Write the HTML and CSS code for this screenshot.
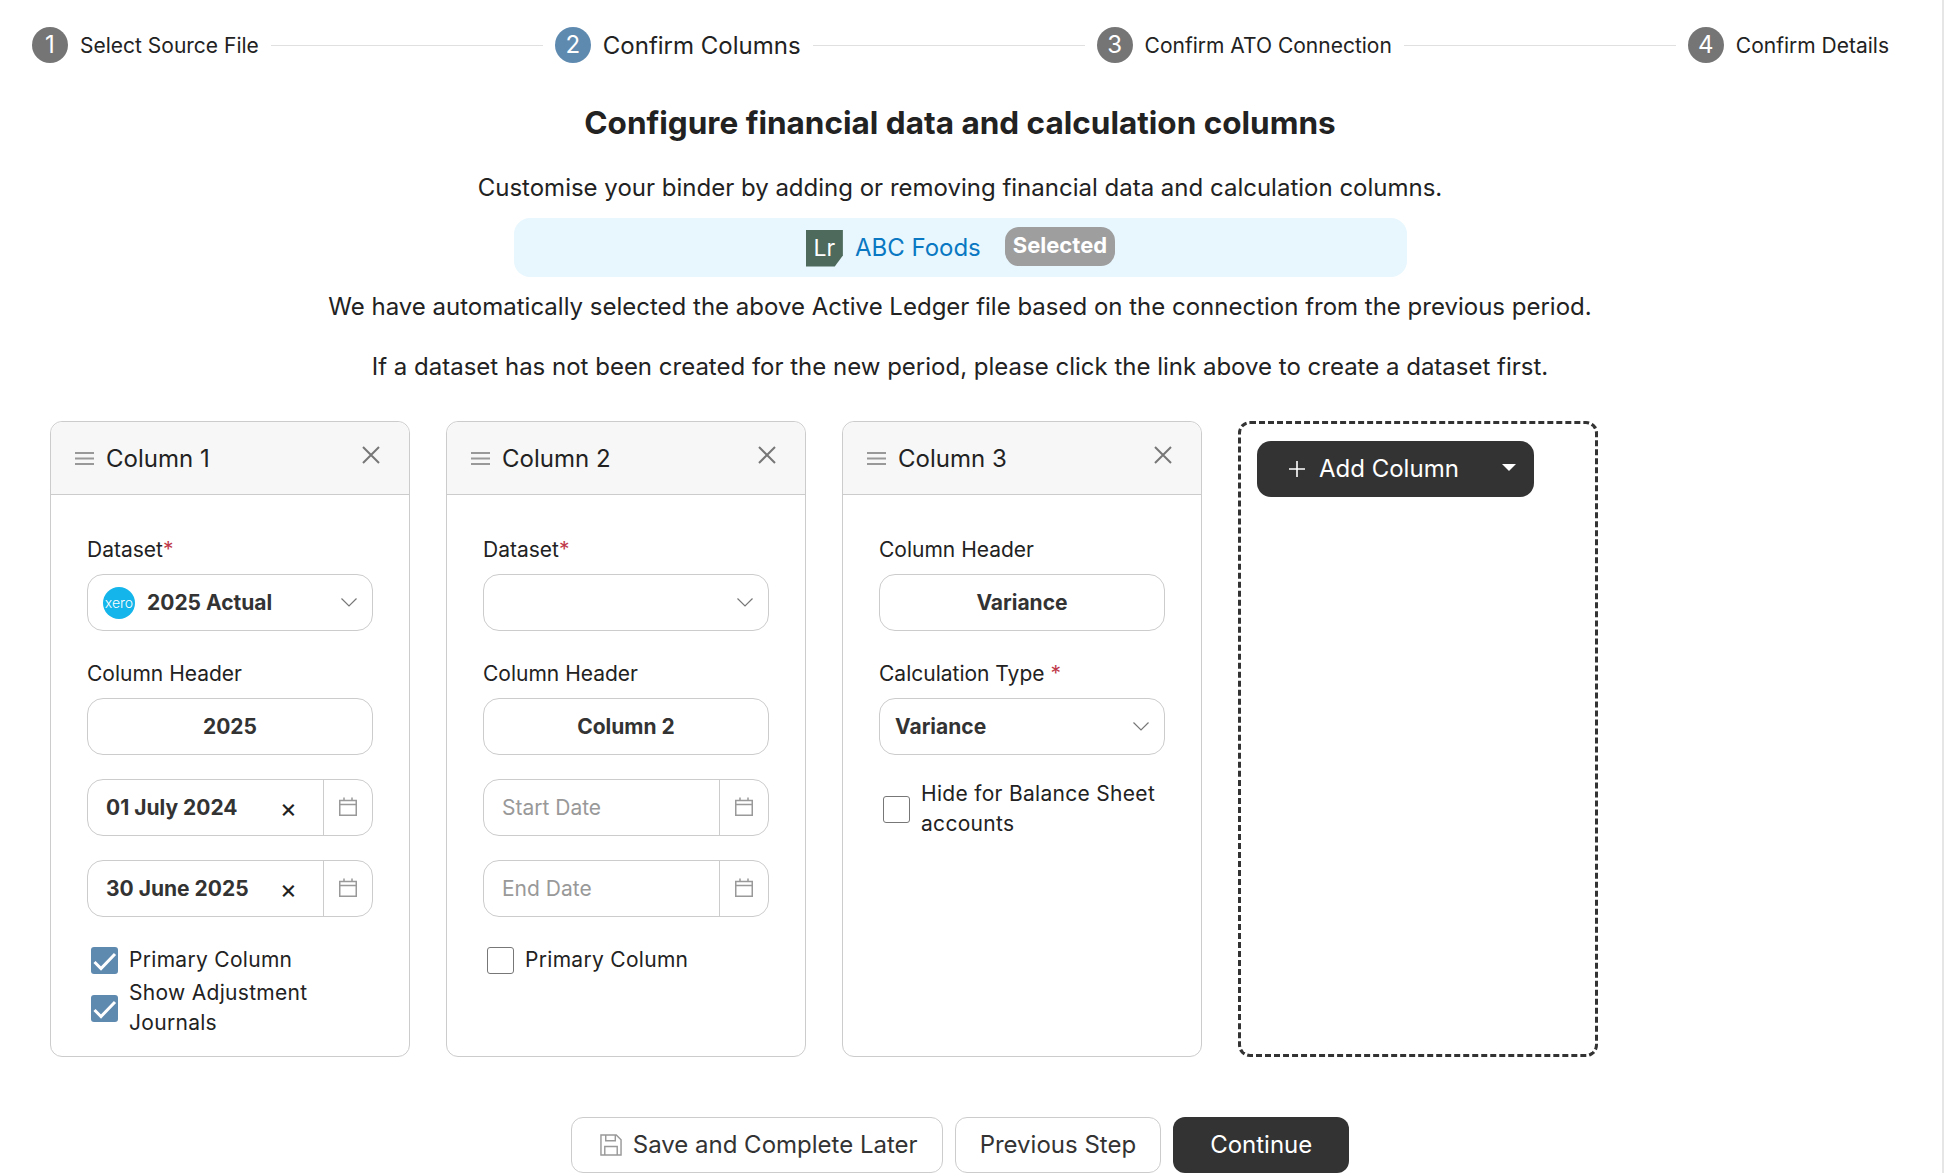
FILE: index.html
```html
<!DOCTYPE html>
<html lang="en">
  <head>
    <meta charset="UTF-8">
    <title>Confirm Columns</title>
    <link rel="stylesheet" href="styles.css">
  </head>
  <body>
    <div class="scroll-edge"></div>
    <div class="page">
      <div class="steps">
        <div class="step"><span class="step-num">1</span><span class="step-name">Select Source File</span></div>
        <div class="step-line"></div>
        <div class="step step-active"><span class="step-num">2</span><span class="step-name">Confirm Columns</span></div>
        <div class="step-line"></div>
        <div class="step"><span class="step-num">3</span><span class="step-name">Confirm ATO Connection</span></div>
        <div class="step-line"></div>
        <div class="step"><span class="step-num">4</span><span class="step-name">Confirm Details</span></div>
      </div>

      <h1 class="title">Configure financial data and calculation columns</h1>
      <p class="intro">Customise your binder by adding or removing financial data and calculation columns.</p>

      <div class="ledger">
        <span class="ledger-logo">Lr</span>
        <a class="ledger-name" href="#">ABC Foods</a>
        <span class="ledger-badge">Selected</span>
      </div>

      <p class="note">We have automatically selected the above Active Ledger file based on the connection from the previous period.</p>
      <p class="note note-last">If a dataset has not been created for the new period, please click the link above to create a dataset first.</p>

      <div class="columns">
        <!-- Column 1 -->
        <div class="card">
          <div class="card-head">
            <svg class="icon-drag" viewBox="0 0 19 13"><path d="M0 1h19M0 6.5h19M0 12h19"/></svg>
            <span class="card-title">Column 1</span>
            <svg class="icon-close" viewBox="0 0 18 18"><path d="M1 1l16 16M17 1L1 17"/></svg>
          </div>
          <div class="card-body">
            <label class="field-label">Dataset<span class="req">*</span></label>
            <div class="control select">
              <span class="xero">xero</span>
              <span class="value">2025 Actual</span>
              <svg class="icon-chevron" viewBox="0 0 16 9"><path d="M.5.5L8 8 15.5.5"/></svg>
            </div>
            <label class="field-label">Column Header</label>
            <div class="control text-center"><span class="value">2025</span></div>
            <div class="control date">
              <span class="date-value value">01 July 2024</span>
              <span class="date-clear">&times;</span>
              <span class="date-btn"><svg class="icon-cal" viewBox="0 0 18 19"><path d="M.75 3.5h16.5v14.75H.75zM.75 7.5h16.5M5 .5v3M13 .5v3"/></svg></span>
            </div>
            <div class="control date">
              <span class="date-value value">30 June 2025</span>
              <span class="date-clear">&times;</span>
              <span class="date-btn"><svg class="icon-cal" viewBox="0 0 18 19"><path d="M.75 3.5h16.5v14.75H.75zM.75 7.5h16.5M5 .5v3M13 .5v3"/></svg></span>
            </div>
            <div class="check-row first-check">
              <span class="check checked"><svg viewBox="0 0 27 27"><path d="M3.5 15l6.5 6.5L24 7"/></svg></span>
              <span>Primary Column</span>
            </div>
            <div class="check-row">
              <span class="check checked"><svg viewBox="0 0 27 27"><path d="M3.5 15l6.5 6.5L24 7"/></svg></span>
              <span>Show Adjustment Journals</span>
            </div>
          </div>
        </div>

        <!-- Column 2 -->
        <div class="card">
          <div class="card-head">
            <svg class="icon-drag" viewBox="0 0 19 13"><path d="M0 1h19M0 6.5h19M0 12h19"/></svg>
            <span class="card-title">Column 2</span>
            <svg class="icon-close" viewBox="0 0 18 18"><path d="M1 1l16 16M17 1L1 17"/></svg>
          </div>
          <div class="card-body">
            <label class="field-label">Dataset<span class="req">*</span></label>
            <div class="control select">
              <span class="value"></span>
              <svg class="icon-chevron" viewBox="0 0 16 9"><path d="M.5.5L8 8 15.5.5"/></svg>
            </div>
            <label class="field-label">Column Header</label>
            <div class="control text-center"><span class="value">Column 2</span></div>
            <div class="control date">
              <span class="date-value placeholder">Start Date</span>
              <span class="date-btn"><svg class="icon-cal" viewBox="0 0 18 19"><path d="M.75 3.5h16.5v14.75H.75zM.75 7.5h16.5M5 .5v3M13 .5v3"/></svg></span>
            </div>
            <div class="control date">
              <span class="date-value placeholder">End Date</span>
              <span class="date-btn"><svg class="icon-cal" viewBox="0 0 18 19"><path d="M.75 3.5h16.5v14.75H.75zM.75 7.5h16.5M5 .5v3M13 .5v3"/></svg></span>
            </div>
            <div class="check-row first-check">
              <span class="check"></span>
              <span>Primary Column</span>
            </div>
          </div>
        </div>

        <!-- Column 3 -->
        <div class="card">
          <div class="card-head">
            <svg class="icon-drag" viewBox="0 0 19 13"><path d="M0 1h19M0 6.5h19M0 12h19"/></svg>
            <span class="card-title">Column 3</span>
            <svg class="icon-close" viewBox="0 0 18 18"><path d="M1 1l16 16M17 1L1 17"/></svg>
          </div>
          <div class="card-body">
            <label class="field-label">Column Header</label>
            <div class="control text-center"><span class="value">Variance</span></div>
            <label class="field-label">Calculation Type <span class="req">*</span></label>
            <div class="control select">
              <span class="value">Variance</span>
              <svg class="icon-chevron" viewBox="0 0 16 9"><path d="M.5.5L8 8 15.5.5"/></svg>
            </div>
            <div class="check-row first-check">
              <span class="check"></span>
              <span>Hide for Balance Sheet accounts</span>
            </div>
          </div>
        </div>

        <div class="add-zone">
          <button class="add-btn">
            <svg class="icon-plus" viewBox="0 0 16 16"><path d="M8 0v16M0 8h16"/></svg>
            <span>Add Column</span>
            <span class="caret"></span>
          </button>
        </div>
      </div>

      <div class="actions">
        <button class="btn btn-save">
          <svg class="icon-save" viewBox="0 0 23 23"><path d="M1 1h16l5 5v16H1zM6 1v6h10V1M5 22V13h13v9"/></svg>
          Save and Complete Later
        </button>
        <button class="btn">Previous Step</button>
        <button class="btn btn-dark">Continue</button>
      </div>
    </div>
  </body>
</html>
```

FILE: styles.css
```css
html, body {
  margin: 0;
  background-color: #fff;
  color: #222;
  font-family: Inter, "Liberation Sans", sans-serif;
}

.page {
  width: 1920px;
  height: 1173px;
  text-align: center;
}

.scroll-edge {
  position: fixed;
  top: 0;
  right: 0;
  bottom: 0;
  width: 2px;
  background-color: #e6e6e6;
}

/* stepper */
.steps {
  display: flex;
  align-items: center;
  padding: 27px 31px 0 32px;
  height: 36px;
}

.step {
  display: flex;
  align-items: center;
  gap: 12px;
  font-size: 21px;
  white-space: nowrap;
}

.step-num {
  width: 36px;
  height: 36px;
  border-radius: 50%;
  background-color: #757575;
  color: #fff;
  font-size: 24px;
  line-height: 36px;
  text-align: center;
}

.step-active {
  font-size: 24px;
}

.step-active .step-num {
  background-color: #5f8ab0;
}

.step-line {
  flex: 1;
  height: 1px;
  margin: 0 12px;
  background-color: #e0e0e0;
}

/* intro text */
.title {
  margin: 40px 0 0;
  font-size: 31.5px;
  line-height: 40px;
  font-weight: 700;
}

.intro, .note {
  font-size: 24px;
  line-height: 36px;
}

.intro {
  margin: 27px 0 0;
}

.note {
  margin: 12px 0 0;
}

.note-last {
  margin-top: 24px;
}

.ledger {
  display: flex;
  align-items: center;
  justify-content: center;
  width: 893px;
  height: 59px;
  margin: 12px auto 0;
  border-radius: 16px;
  background-color: #e8f7fe;
}

.ledger-logo {
  width: 37px;
  height: 37px;
  margin: 1px 0 0 1px;
  background-color: #4d6a5c;
  color: #fff;
  font-size: 23px;
  line-height: 37px;
  clip-path: polygon(0 0, 100% 0, 100% 70%, 78% 100%, 0 100%);
}

.ledger-name {
  margin-left: 12px;
  color: #0a78c2;
  font-size: 24px;
  text-decoration: none;
}

.ledger-badge {
  margin: -2px 0 0 24px;
  padding: 0 8px;
  height: 39px;
  border-radius: 14px;
  background-color: #9e9e9e;
  color: #fff;
  font-size: 22px;
  font-weight: 700;
  line-height: 36px;
}

/* column cards */
.columns {
  display: flex;
  gap: 36px;
  margin: 36px 0 0 50px;
  text-align: left;
}

.card, .add-zone {
  box-sizing: border-box;
  width: 360px;
  height: 636px;
  border-radius: 12px;
}

.card {
  border: 1px solid #ccc;
}

.card-head {
  display: flex;
  align-items: center;
  box-sizing: border-box;
  height: 73px;
  padding: 0 23px 0 24px;
  border-bottom: 1px solid #ccc;
  border-radius: 12px 12px 0 0;
  background-color: #f7f7f7;
}

.card-title {
  flex: 1;
  margin-left: 12px;
  font-size: 24px;
}

.icon-drag {
  width: 19px;
  height: 13px;
  fill: none;
  stroke: #999;
  stroke-width: 2;
}

.icon-close {
  width: 18px;
  height: 18px;
  margin: -7px 6px 0 0;
  fill: none;
  stroke: #777;
  stroke-width: 2;
}

.card-body {
  padding: 40px 36px 0;
}

.field-label {
  display: block;
  margin-bottom: 9px;
  font-size: 21px;
  line-height: 30px;
}

.req {
  color: #c0394b;
}

.control {
  display: flex;
  align-items: center;
  box-sizing: border-box;
  height: 57px;
  margin-bottom: 28px;
  border: 1px solid #ccc;
  border-radius: 16px;
  font-size: 21px;
}

.value {
  font-weight: 700;
  color: #333;
}

.select {
  padding: 0 15px;
}

.select .value {
  flex: 1;
}

.text-center {
  justify-content: center;
}

.xero {
  width: 32px;
  height: 32px;
  margin-right: 12px;
  border-radius: 50%;
  background-color: #13b5ea;
  color: #fff;
  font-size: 14px;
  font-weight: 300;
  line-height: 31px;
  text-align: center;
}

.icon-chevron {
  width: 16px;
  height: 9px;
  fill: none;
  stroke: #777;
  stroke-width: 1.2;
}

.date {
  margin-bottom: 24px;
}

.text-center + .date {
  margin-top: -4px;
}

.date-value {
  flex: 1;
  padding-left: 18px;
}

.placeholder {
  color: #999;
}

.date-clear {
  margin-right: 26px;
  font-size: 26px;
  line-height: 26px;
}

.date-btn {
  display: flex;
  align-items: center;
  justify-content: center;
  width: 48px;
  height: 100%;
  border-left: 1px solid #ccc;
}

.icon-cal {
  width: 18px;
  height: 19px;
  margin-top: -3px;
  fill: none;
  stroke: #999;
  stroke-width: 1.5;
}

.check-row {
  display: flex;
  align-items: center;
  gap: 11px;
  margin-top: 3px;
  padding-left: 4px;
  font-size: 21px;
  line-height: 30px;
  letter-spacing: .3px;
}

.first-check {
  margin-top: 28px;
}

.select + .first-check {
  margin-top: -4px;
}

.check {
  flex: none;
  box-sizing: border-box;
  width: 27px;
  height: 27px;
  border: 1px solid #777;
  border-radius: 3px;
}

.check.checked {
  border: 0;
  background-color: #5f8ab0;
}

.check svg {
  display: block;
  fill: none;
  stroke: #fff;
  stroke-width: 3;
}

/* add column */
.add-zone {
  padding: 17px 16px;
  border: 3px dashed #333;
}

.add-btn {
  display: flex;
  align-items: center;
  box-sizing: border-box;
  width: 277px;
  height: 56px;
  padding: 0 18px 2px 32px;
  border: 0;
  border-radius: 14px;
  background-color: #333;
  color: #fff;
  font-family: inherit;
  font-size: 24px;
}

.icon-plus {
  width: 16px;
  height: 16px;
  margin: 2px 14px 0 0;
  fill: none;
  stroke: #fff;
  stroke-width: 1.6;
}

.caret {
  margin: -2px 0 0 auto;
  border-top: 7px solid #fff;
  border-left: 7px solid transparent;
  border-right: 7px solid transparent;
}

/* bottom buttons */
.actions {
  display: flex;
  justify-content: center;
  gap: 12px;
  margin-top: 60px;
}

.btn {
  display: flex;
  align-items: center;
  box-sizing: border-box;
  height: 56px;
  padding: 0 24px 2px;
  border: 1px solid #ccc;
  border-radius: 12px;
  background-color: #fff;
  color: #333;
  font-family: inherit;
  font-size: 24px;
}

.btn-save {
  padding-left: 28px;
}

.btn-dark {
  padding: 0 37px 2px;
  border: 0;
  background-color: #333;
  color: #fff;
}

.icon-save {
  width: 22px;
  height: 22px;
  margin: 2px 11px 0 0;
  fill: none;
  stroke: #999;
  stroke-width: 1.5;
}
```
